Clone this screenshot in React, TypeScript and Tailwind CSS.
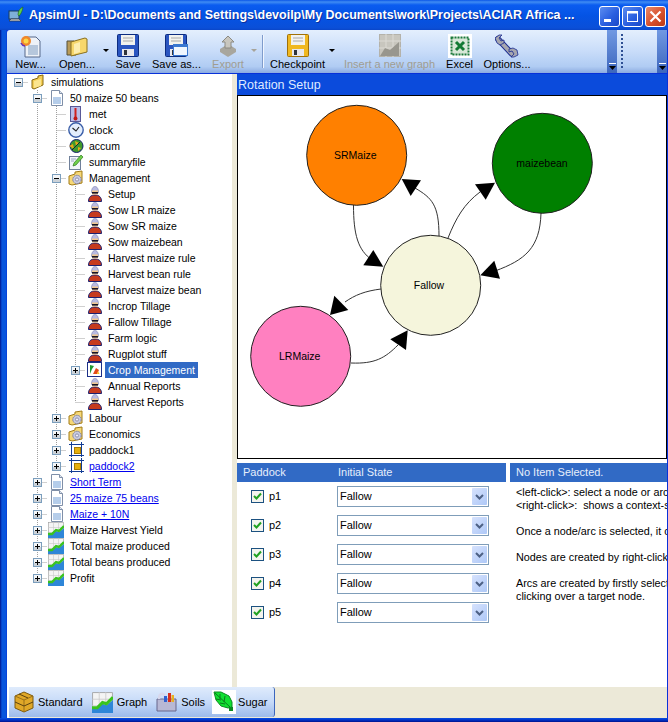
import React from "react";

type Row = { l: number; e?: "+" | "-"; i: string; t: string; link?: boolean; sel?: boolean };

const rows: Row[] = [
  { l: 0, e: "-", i: "folder", t: "simulations" },
  { l: 1, e: "-", i: "doc", t: "50 maize 50 beans" },
  { l: 2, i: "met", t: "met" },
  { l: 2, i: "clock", t: "clock" },
  { l: 2, i: "accum", t: "accum" },
  { l: 2, i: "summary", t: "summaryfile" },
  { l: 2, e: "-", i: "mgmt", t: "Management" },
  { l: 3, i: "person", t: "Setup" },
  { l: 3, i: "person", t: "Sow LR maize" },
  { l: 3, i: "person", t: "Sow SR maize" },
  { l: 3, i: "person", t: "Sow maizebean" },
  { l: 3, i: "person", t: "Harvest maize rule" },
  { l: 3, i: "person", t: "Harvest bean rule" },
  { l: 3, i: "person", t: "Harvest maize bean" },
  { l: 3, i: "person", t: "Incrop Tillage" },
  { l: 3, i: "person", t: "Fallow Tillage" },
  { l: 3, i: "person", t: "Farm logic" },
  { l: 3, i: "person", t: "Rugplot stuff" },
  { l: 3, e: "+", i: "crop", t: "Crop Management", sel: true },
  { l: 3, i: "person", t: "Annual Reports" },
  { l: 3, i: "person", t: "Harvest Reports" },
  { l: 2, e: "+", i: "mgmt", t: "Labour" },
  { l: 2, e: "+", i: "mgmt", t: "Economics" },
  { l: 2, e: "+", i: "paddock", t: "paddock1" },
  { l: 2, e: "+", i: "paddock", t: "paddock2", link: true },
  { l: 1, e: "+", i: "doc", t: "Short Term", link: true },
  { l: 1, e: "+", i: "doc", t: "25 maize 75 beans", link: true },
  { l: 1, e: "+", i: "doc", t: "Maize + 10N", link: true },
  { l: 1, e: "+", i: "graph", t: "Maize Harvest Yield" },
  { l: 1, e: "+", i: "graph", t: "Total maize produced" },
  { l: 1, e: "+", i: "graph", t: "Total beans produced" },
  { l: 1, e: "+", i: "graph", t: "Profit" },
];

function continues(idx: number, col: number) {
  for (let k = idx + 1; k < rows.length; k++) {
    if (rows[k].l < col) return false;
    if (rows[k].l === col) return true;
  }
  return false;
}

function Connectors({ idx }: { idx: number }) {
  const r = rows[idx];
  const parts: React.ReactNode[] = [];
  for (let c = 1; c <= r.l; c++) {
    const x = 9.5 + 19 * c;
    const more = continues(idx, c);
    if (c === r.l) {
      parts.push(<line key={"v" + c} x1={x} x2={x} y1={0} y2={more ? 16 : 8} stroke="#a0a0a0" strokeDasharray="1 1" />);
    } else if (more) {
      parts.push(<line key={"v" + c} x1={x} x2={x} y1={0} y2={16} stroke="#a0a0a0" strokeDasharray="1 1" />);
    }
  }
  const cx = 9.5 + 19 * r.l;
  parts.push(<line key="h" x1={cx} x2={cx + 10} y1={8.5} y2={8.5} stroke="#a0a0a0" strokeDasharray="1 1" />);
  if (r.e) {
    parts.push(
      <g key="e" shapeRendering="crispEdges">
        <rect x={cx - 4} y={4.5} width={8} height={8} fill="#f4f6f8" stroke="#7b9ebd" />
        <rect x={cx - 3.5} y={9} width={7} height={3} fill="#ccd2d8" />
        <line x1={cx - 2.5} x2={cx + 2.5} y1={8.5} y2={8.5} stroke="#000" />
        {r.e === "+" && <line x1={cx} x2={cx} y1={6} y2={11} stroke="#000" />}
      </g>
    );
  }
  return (
    <svg width={19 * (r.l + 1)} height={16} className="shrink-0">
      {parts}
    </svg>
  );
}

function TreeIcon({ n }: { n: string }) {
  const c = { width: 16, height: 16, viewBox: "0 0 16 16", className: "shrink-0 ml-[2px] mr-[2px]" };
  switch (n) {
    case "folder":
      return (
        <svg {...c}>
          <path d="M2 6l6-2V2l5-1v10l-9 4-2-1z" fill="#f3cd55" stroke="#8a6a10" />
          <path d="M4 7l7-2v7l-7 2z" fill="#fbe58f" />
        </svg>
      );
    case "doc":
      return (
        <svg {...c}>
          <path d="M2.5.5h8l3 3v12h-11z" fill="#fff" stroke="#7f8fa8" />
          <rect x="4" y="7" width="8" height="7" fill="#b5cdea" />
          <path d="M10.5.5v3h3" fill="#dfe6f0" stroke="#7f8fa8" />
        </svg>
      );
    case "met":
      return (
        <svg {...c}>
          <rect x="2.5" y=".5" width="10" height="15" fill="#b8bce8" stroke="#5a5a98" />
          <rect x="6.500" y="2" width="2" height="9" fill="#d02020" />
          <circle cx="7.500" cy="12.500" r="2" fill="#c01818" />
        </svg>
      );
    case "clock":
      return (
        <svg {...c}>
          <circle cx="8" cy="8" r="7.200" fill="#e4eefc" stroke="#3a5ea8" strokeWidth="1.400" />
          <path d="M4.500 6L8 9l3-4" fill="none" stroke="#222" strokeWidth="1.100" />
        </svg>
      );
    case "accum":
      return (
        <svg {...c}>
          <circle cx="8.500" cy="8" r="6.500" fill="#3f9a2c" stroke="#14206a" />
          <path d="M1 8l4-2 1 5zM7 3l4 2-3 3zM10 9l3 1-3 3z" fill="#e8a818" />
          <path d="M4 12l8-8" stroke="#123" />
        </svg>
      );
    case "summary":
      return (
        <svg {...c}>
          <rect x="1.500" y="2.500" width="11" height="13" fill="#f2f5fa" stroke="#70809a" />
          <path d="M5 12l1-3 7-8 2 2-7 8z" fill="#6fcf4a" stroke="#2e7a20" strokeWidth=".7" />
          <path d="M3 5h5M3 7h3" stroke="#9aa8c0" />
        </svg>
      );
    case "mgmt":
      return (
        <svg {...c}>
          <path d="M1 6l6-2V2l7-1v12l-10 2-3-1z" fill="#f6d877" stroke="#a37c18" />
          <circle cx="9" cy="9.500" r="4.200" fill="#c8cbe0" stroke="#74749a" strokeDasharray="1.600 .7" />
          <circle cx="9" cy="9.500" r="1.600" fill="#f0f0f8" stroke="#74749a" strokeWidth=".7" />
        </svg>
      );
    case "person":
      return (
        <svg {...c}>
          <path d="M1.500 15.500c0-4.500 2.500-6.500 6.500-6.500s6.500 2 6.500 6.500z" fill="#c63a1e" stroke="#1c2070" />
          <path d="M4.500 6.500c0-4 1.500-6 3.500-6s3.500 2 3.500 6z" fill="#b8bae2" stroke="#7478aa" strokeWidth=".6" />
          <rect x="5" y="4.500" width="6" height="4" fill="#f2c890" />
          <rect x="5" y="6" width="6" height="1.600" fill="#16162a" />
        </svg>
      );
    case "crop":
      return (
        <svg {...c}>
          <rect x=".5" y=".5" width="14" height="14" fill="#fff" stroke="#1b2f88" />
          <path d="M3 12V3l4 1-2 3z" fill="#1f9a30" />
          <path d="M6 12l3-6 3 2-2 4z" fill="#e24a18" />
          <path d="M10 12l1-3 1.500 3z" fill="#f6c21a" />
        </svg>
      );
    case "paddock":
      return (
        <svg {...c} shapeRendering="crispEdges">
          <path d="M3.500 0v15M13.500 0v15M1 2.500h15M1 13.500h15" stroke="#123c94" fill="none" />
          <rect x="6" y="5" width="6" height="6" fill="#e6b00e" stroke="#a87a00" />
        </svg>
      );
    default:
      return <MiniGraph size={16} cls="shrink-0 ml-[1px] mr-[3px]" />;
  }
}

function MiniGraph({ size, cls }: { size: number; cls?: string }) {
  return (
    <svg width={size} height={size} viewBox="0 0 16 16" className={cls}>
      <rect x=".5" y=".5" width="15" height="15" fill="#f4f4f4" stroke="#9a9a9a" strokeWidth=".6" />
      <path d="M0 5.500h16M0 10.500h16M5.500 0v16M10.500 0v16" stroke="#c8c8c8" strokeWidth=".6" />
      <path d="M0 16v-4l4 1 4-4 3 1 5-4v10z" fill="#2e86d8" />
      <path d="M0 12l4 0 4-4 3 1 5-5" fill="none" stroke="#39c31e" strokeWidth="2.400" />
    </svg>
  );
}

function Floppy({ body, dark, x = 0 }: { body: string; dark: string; x?: number }) {
  return (
    <g transform={`translate(${x},0)`}>
      <rect x=".5" y=".5" width="21" height="22" rx="1" fill={body} stroke={dark} />
      <rect x="4" y="1" width="14" height="10" fill="#f2f2ee" />
      <path d="M6 4h10M6 7h10" stroke="#a8a8a8" />
      <rect x="5" y="15" width="12" height="7" fill="#e8e8ee" />
      <rect x="7" y="16" width="3" height="5" fill="#30343c" />
    </g>
  );
}

function Arrow({ off }: { off?: boolean }) {
  return (
    <svg width="6" height="3" className="mt-[19px]">
      <path d="M0 0h6L3 3z" fill={off ? "#a7a49a" : "#000"} />
    </svg>
  );
}

function TB({ w, label, off, children }: { w: string; label: string; off?: boolean; children: React.ReactNode }) {
  return (
    <div className={`${w} flex flex-col items-center shrink-0`}>
      <div className="h-[25px] flex items-center justify-center mt-[3px]">{children}</div>
      <div className={`leading-[13px] whitespace-nowrap ${off ? "text-[#a09d91]" : "text-black"}`}>{label}</div>
    </div>
  );
}

function ArrowCell({ w, off }: { w: string; off?: boolean }) {
  return (
    <div className={`${w} flex justify-center shrink-0`}>
      <Arrow off={off} />
    </div>
  );
}

function Chevron() {
  return (
    <div className="w-[10px] h-full bg-[linear-gradient(180deg,#7199e2,#3c66bd)] flex items-end justify-center pb-[3px] shrink-0">
      <svg width="7" height="7">
        <rect x="0" y="0" width="7" height="1" fill="#fff" />
        <path d="M0 3h7L3.500 7z" fill="#000" />
      </svg>
    </div>
  );
}

function Win({ kind }: { kind: "min" | "max" | "close" }) {
  const bg =
    kind === "close"
      ? "bg-[linear-gradient(135deg,#e78a6c,#d8502c_55%,#b83a16)]"
      : "bg-[linear-gradient(135deg,#5c8df0,#2a5fe0_55%,#1a48c8)]";
  return (
    <div className={`w-[21px] h-[21px] rounded-[3px] border border-white flex items-center justify-center shrink-0 ${bg}`}>
      <svg width="15" height="15">
        {kind === "min" && <rect x="2" y="10" width="7" height="3" fill="#fff" />}
        {kind === "max" && (
          <g fill="none" stroke="#fff">
            <rect x="2.500" y="2.500" width="10" height="10" />
            <path d="M2 3.500h11" strokeWidth="2" />
          </g>
        )}
        {kind === "close" && <path d="M2.500 2.500l10 10M12.500 2.500l-10 10" stroke="#fff" strokeWidth="2.200" />}
      </svg>
    </div>
  );
}

function Combo() {
  return (
    <div className="w-[152px] h-[21px] border border-[#7f9db9] bg-white flex items-center justify-between pl-[2px] pr-[1px]">
      <span className="leading-[13px]">Fallow</span>
      <div className="w-[15px] h-[17px] rounded-[1px] bg-[linear-gradient(135deg,#d6e2fd,#aec8f7)] flex items-center justify-center">
        <svg width="9" height="6">
          <path d="M1 1l3.500 3.500L8 1" fill="none" stroke="#4d6185" strokeWidth="2" />
        </svg>
      </div>
    </div>
  );
}

function Paddock({ n }: { n: string }) {
  return (
    <div className="flex items-center h-[21px]">
      <div className="ml-[14px] w-[13px] h-[13px] border border-[#1c5180] bg-[#f4f4ee] flex items-center justify-center shrink-0">
        <svg width="9" height="9">
          <path d="M1 4l2.500 2.500L8 1.500" fill="none" stroke="#21a121" strokeWidth="2" />
        </svg>
      </div>
      <span className="ml-[5px] w-[68px]">{n}</span>
      <Combo />
    </div>
  );
}

function Tab({ label, ml, icon }: { label: string; ml: string; icon: React.ReactNode }) {
  return (
    <div className={`flex items-center shrink-0 ${ml}`}>
      {icon}
      <span className="ml-[4px] leading-[13px]">{label}</span>
    </div>
  );
}

function Graph() {
  const arc = { fill: "none", stroke: "#333", strokeWidth: 1 };
  const Node = ({ x, y, f, t, tx, ty }: { x: number; y: number; f: string; t: string; tx: number; ty: number }) => (
    <>
      <circle cx={x} cy={y} r={50} fill={f} stroke="#222" />
      <text x={tx} y={ty + 4} textAnchor="middle" fontSize="10.5" fill="#000">
        {t}
      </text>
    </>
  );
  return (
    <svg width="428" height="362" viewBox="238 96 428 362" className="block">
      <path d="M353.500 205C353.500 235 358 250 372 260" {...arc} />
      <path d="M439 236C439 205 432 198 415 188" {...arc} />
      <path d="M448 238C456 218 464 204 480 192" {...arc} />
      <path d="M541 213C540 248 525 260 495 271" {...arc} />
      <path d="M381 289C365 291 355 295 345 302" {...arc} />
      <path d="M351 363C375 364 385 358 398 345" {...arc} />
      <Node x={356.700} y={155.300} f="#ff8000" t="SRMaize" tx={355.300} ty={155} />
      <Node x={542.300} y={163.300} f="#008000" t="maizebean" tx={542} ty={163} />
      <Node x={430.700} y={285.300} f="#f5f5dc" t="Fallow" tx={429} ty={285} />
      <Node x={300.700} y={356.300} f="#ff80c0" t="LRMaize" tx={299.700} ty={356} />
      <g fill="#000">
        <polygon points="373.300,250 363.300,265.300 383.300,266.700" />
        <polygon points="401.700,179 421,180.300 410.700,196" />
        <polygon points="495,182.700 475,184.300 485.700,199.700" />
        <polygon points="480.300,275.300 494.300,260.700 500,278.700" />
        <polygon points="330,315 334.300,295.700 348.300,310" />
        <polygon points="407.700,330.300 390.300,339.300 406,350" />
      </g>
    </svg>
  );
}

export default function App() {
  const info = [
    "<left-click>: select a node or arc to edit it",
    "<right-click>:  shows a context-sensitive menu",
    "",
    "Once a node/arc is selected, it can be edited",
    "",
    "Nodes are created by right-clicking on the canvas",
    "",
    "Arcs are created by firstly selecting a source node, then",
    "clicking over a target node.",
  ];
  return (
    <div className="w-[668px] h-[722px] overflow-hidden flex flex-col text-[11px] text-black bg-[linear-gradient(90deg,#00138c_0,#0855dd_2px,#0855dd_6px,#0831d9_7px)] font-['Liberation_Sans',sans-serif]">
      {/* Title bar */}
      <div className="h-[30px] shrink-0 flex items-center bg-[linear-gradient(180deg,#0a56e8_0,#3f8cf3_2px,#0a5cf0_5px,#0453e4_16px,#0a4fd8_28px,#0a46c8_100%)] pl-[8px] pr-[2px]">
        <svg width="16" height="18" viewBox="0 0 16 18" className="shrink-0">
          <rect x="1" y="5" width="10" height="8" fill="#7fb0d8" stroke="#1c3c5c" />
          <path d="M1 15l2-2h8l2 2z" fill="#d0d4d8" stroke="#303840" strokeWidth=".7" />
          <path d="M10 9c0-4 2-7 5-8-0.500 4-2 7-4 9z" fill="#5fcf4a" stroke="#1f6020" strokeWidth=".6" />
        </svg>
        <div className="ml-[5px] w-[558px] whitespace-nowrap text-white font-bold text-[12.5px] [text-shadow:1px_1px_0_#0a2f9c]">
          {"ApsimUI - D:\\Documents and Settings\\devoilp\\My Documents\\work\\Projects\\ACIAR Africa ..."}
        </div>
        <div className="ml-auto flex gap-[2px] mt-[2px]">
          <Win kind="min" />
          <Win kind="max" />
          <Win kind="close" />
        </div>
      </div>

      <div className="ml-[7px] mr-[1px] flex-1 min-h-0 flex flex-col">
        {/* Toolbar */}
        <div className="h-[43px] shrink-0 flex rounded-tl-[3px] bg-[linear-gradient(180deg,#e4effd_0%,#c8dcf9_50%,#b0ccf3_85%,#8cabe0_100%)] pl-[1px]">
          <TB w="w-[45px]" label="New...">
            <svg width="24" height="24" viewBox="0 0 24 24">
              <path d="M6 3h11l4 4v16H6z" fill="#eef2f8" stroke="#56688a" />
              <rect x="9" y="11" width="10" height="10" fill="#b6c7dc" />
              <circle cx="7" cy="7" r="5" fill="#f0882c" />
              <circle cx="7" cy="7" r="2.500" fill="#fbd848" />
              <path d="M2 9a5 5 0 0 0 4 3" stroke="#6a30b0" fill="none" strokeWidth="1.500" />
            </svg>
          </TB>
          <TB w="w-[48px]" label="Open...">
            <svg width="24" height="24" viewBox="0 0 24 24">
              <path d="M2 7h7l2 2v12H2z" fill="#b99b58" stroke="#54503c" />
              <path d="M6 8l14-4 2 1v13L6 22z" fill="#f7d76c" stroke="#8a7020" />
              <path d="M9 10l6-2v10l-6 2z" fill="#fdeeb0" />
            </svg>
          </TB>
          <ArrowCell w="w-[9px]" />
          <TB w="w-[36px]" label="Save">
            <svg width="22" height="23"><Floppy body="#2a55c0" dark="#0c2c80" /></svg>
          </TB>
          <TB w="w-[61px]" label="Save as...">
            <svg width="24" height="23">
              <Floppy body="#2a55c0" dark="#0c2c80" />
              <rect x="8.500" y="10.500" width="14" height="11" fill="#f0f6fe" stroke="#3a78d0" />
              <rect x="8" y="10" width="15" height="3" fill="#3a78d0" />
            </svg>
          </TB>
          <TB w="w-[42px]" label="Export" off>
            <svg width="24" height="24" viewBox="0 0 24 24">
              <path d="M4 15l8-5 8 5v3l-8 5-8-5z" fill="#a8a69e" />
              <path d="M12 2l6 6h-3v6H9V8H6z" fill="#c8c6be" stroke="#8c8a82" />
            </svg>
          </TB>
          <ArrowCell w="w-[9px]" off />
          <div className="w-[10px] shrink-0 flex justify-center">
            <div className="w-[2px] h-[33px] mt-[5px] bg-[linear-gradient(90deg,#7f9ccc_50%,#f0f6ff_50%)]" />
          </div>
          <TB w="w-[59px]" label="Checkpoint">
            <svg width="22" height="23"><Floppy body="#f0b820" dark="#a07008" /></svg>
          </TB>
          <ArrowCell w="w-[10px]" />
          <TB w="w-[105px]" label="Insert a new graph" off>
            <svg width="22" height="23" viewBox="0 0 22 23">
              <rect x=".5" y=".5" width="21" height="22" fill="#c8c6be" stroke="#b4b2aa" />
              <path d="M0 7h22M0 14h22M7 0v23M14 0v23" stroke="#dcdad4" />
              <path d="M1 22l5-8 5 2 9-8v14z" fill="#98968e" />
            </svg>
          </TB>
          <TB w="w-[35px]" label="Excel">
            <svg width="24" height="24" viewBox="0 0 24 24">
              <rect width="24" height="24" fill="#fff" />
              <rect x="3.500" y="3.500" width="17" height="17" fill="#d8e8d8" stroke="#1d7a3c" strokeWidth="2" strokeDasharray="2 1" />
              <path d="M8 8l8 8M16 8l-8 8" stroke="#127a34" strokeWidth="3" />
            </svg>
          </TB>
          <TB w="w-[60px]" label="Options...">
            <svg width="24" height="24" viewBox="0 0 24 24">
              <path d="M3 5l14 15" stroke="#1c2c90" strokeWidth="6" strokeLinecap="round" />
              <path d="M3 5l14 15" stroke="#a6a6ae" strokeWidth="4" strokeLinecap="round" />
              <path d="M0 4l4-3 3 0-3 3 2 3 3-1 0 3-4 2-3-2z" fill="#a6a6ae" stroke="#1c2c90" strokeWidth=".8" />
              <path d="M23 21l-4 2-3 0 3-3-2-3-3 1 0-3 4-1 4 2z" fill="#a6a6ae" stroke="#1c2c90" strokeWidth=".8" />
            </svg>
          </TB>
          <div className="ml-auto flex h-full">
            <Chevron />
            <div className="w-[40px] flex pl-[4px] pt-[4px]">
              <div className="w-[2px] h-[34px] bg-[repeating-linear-gradient(180deg,#2e4f93_0,#2e4f93_2px,transparent_2px,transparent_4px)]" />
            </div>
            <Chevron />
          </div>
        </div>

        {/* Panes */}
        <div className="flex-1 min-h-0 flex bg-[#ece9d8] mt-[1px]">
          <div className="w-[225px] shrink-0 bg-white overflow-hidden pl-[2px] text-[10.5px]">
            {rows.map((r, i) => (
              <div key={i} className="flex h-4 items-center">
                <Connectors idx={i} />
                <TreeIcon n={r.i} />
                <span
                  className={`px-[3px] h-4 leading-[16px] whitespace-nowrap ${r.sel ? "bg-[#316ac5] text-white" : ""} ${r.link ? "text-[#0000ee] underline" : ""}`}
                >
                  {r.t}
                </span>
              </div>
            ))}
          </div>
          <div className="w-[5px] shrink-0" />
          <div className="flex-1 min-w-0 flex flex-col">
            <div className="h-[21px] shrink-0 bg-[#0b4bdc] text-[#dfe9ff] text-[12.5px] pl-[1px] leading-[22px]">Rotation Setup</div>
            <div className="border border-black bg-white shrink-0">
              <Graph />
            </div>
            <div className="flex-1 bg-white flex pt-[4px]">
              <div className="w-[269px] shrink-0">
                <div className="h-[19px] bg-[#316ac5] text-[#e6eefb] flex items-center pl-[6px]">
                  <span className="w-[95px]">Paddock</span>
                  <span>Initial State</span>
                </div>
                <div className="pt-[4px] flex flex-col gap-[8px]">
                  <Paddock n="p1" />
                  <Paddock n="p2" />
                  <Paddock n="p3" />
                  <Paddock n="p4" />
                  <Paddock n="p5" />
                </div>
              </div>
              <div className="ml-[4px] flex-1 min-w-0 overflow-hidden">
                <div className="h-[19px] bg-[#316ac5] text-[#e6eefb] flex items-center pl-[6px]">No Item Selected.</div>
                <div className="pt-[4px] pl-[6px] whitespace-pre leading-[13px] text-[10.8px]">
                  {info.map((t, i) => (
                    <div key={i} className="h-[13px]">{t}</div>
                  ))}
                </div>
              </div>
            </div>
          </div>
        </div>

        {/* Bottom tabs */}
        <div className="h-[31px] shrink-0 flex bg-[#ece9d8]">
          <div className="w-[2px] bg-white" />
          <div className="w-[266px] h-[30px] flex items-center pl-[5px] rounded-r-[3px] border-r border-[#3c66bd] bg-[linear-gradient(180deg,#dfebfc_0%,#c6daf8_50%,#9dbbeb_100%)]">
            <Tab
              label="Standard"
              ml=""
              icon={
                <svg width="20" height="22" viewBox="0 0 20 22">
                  <path d="M10 1l9 4v12l-9 4-9-4V5z" fill="#e0a828" stroke="#7c5a10" />
                  <path d="M1 5l9 4 9-4M10 9v12" fill="none" stroke="#9a7018" />
                  <path d="M1 11l9 4 9-4M5 3l9 4" fill="none" stroke="#5c4210" />
                </svg>
              }
            />
            <Tab label="Graph" ml="ml-[9px]" icon={<MiniGraph size={21} />} />
            <Tab
              label="Soils"
              ml="ml-[9px]"
              icon={
                <svg width="21" height="22" viewBox="0 0 21 22">
                  <path d="M1 8h19v12H1z" fill="#b8b8d4" stroke="#66668c" />
                  <path d="M3 8c0-7 6-7 6 0" fill="none" stroke="#d8d8ec" strokeWidth="2.500" />
                  <rect x="12" y="2" width="3" height="9" fill="#d83020" />
                  <rect x="8" y="5" width="3" height="6" fill="#3060d0" />
                  <rect x="15.500" y="4" width="2.500" height="7" fill="#e8b020" />
                </svg>
              }
            />
            <Tab
              label="Sugar"
              ml="ml-[7px]"
              icon={
                <svg width="24" height="24" viewBox="0 0 24 24" className="bg-white -mr-[2px]">
                  <path d="M2 2h7l8 4 3 6v5l-4 1-7-2-5-6z" fill="#10e030" stroke="#0a8a20" />
                  <path d="M3 3l15 14M8 4v5M13 6l-1 6M4 9l5 1M8 13l5 1" stroke="#0a7a1c" fill="none" />
                  <rect x="17" y="17" width="4" height="4" fill="#0a8a20" />
                </svg>
              }
            />
          </div>
        </div>
      </div>
      <div className="h-[4px] shrink-0 bg-[linear-gradient(180deg,#0a4fe0,#0032c8_50%,#00138c)]" />
    </div>
  );
}
